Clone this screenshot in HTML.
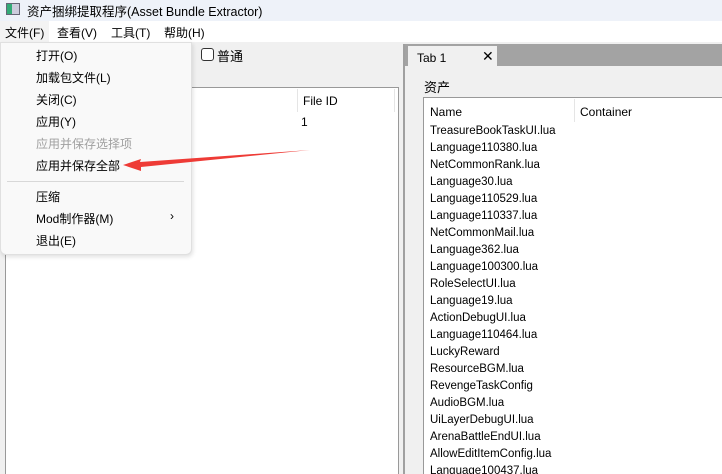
<!DOCTYPE html>
<html style="overflow:hidden;width:722px;height:474px"><head><meta charset="utf-8"><style>
*{margin:0;padding:0;box-sizing:border-box}
body{width:722px;height:474px;overflow:hidden;background:#f0f0f0;font-family:"Liberation Sans","Noto Sans CJK SC",sans-serif;font-size:12px;color:#000;position:relative}
.a{position:absolute;white-space:nowrap}
</style></head><body>
<div class="a" style="left:0;top:0;width:722px;height:21px;background:#eef2f9"></div>
<div class="a" style="left:6px;top:3px;width:14px;height:12px;border:1px solid #667;background:linear-gradient(90deg,#3a7 0 40%,#ccd 40%)"></div>
<div class="a" style="left:27px;top:1px;font-size:12.5px">资产捆绑提取程序(Asset Bundle Extractor)</div>
<div class="a" style="left:0;top:21px;width:722px;height:21px;background:#fff"></div>
<div class="a" style="left:0;top:21px;width:49px;height:21px;background:#f3f3f3"></div>
<div class="a" style="left:5px;top:24px">文件(F)</div>
<div class="a" style="left:57px;top:24px">查看(V)</div>
<div class="a" style="left:111px;top:24px">工具(T)</div>
<div class="a" style="left:164px;top:24px">帮助(H)</div>

<div class="a" style="left:201px;top:48px;width:13px;height:13px;border:1px solid #333;border-radius:3px;background:#fff"></div>
<div class="a" style="left:217px;top:46px;font-size:13px">普通</div>

<div class="a" style="left:5px;top:87px;width:394px;height:390px;background:#fff;border:1px solid #999"></div>
<div class="a" style="left:297px;top:89px;width:1px;height:23px;background:#e5e5e5"></div>
<div class="a" style="left:394px;top:89px;width:1px;height:23px;background:#e5e5e5"></div>
<div class="a" style="left:303px;top:94px">File ID</div>
<div class="a" style="left:301px;top:115px">1</div>

<div class="a" style="left:403px;top:44px;width:319px;height:430px;background:#f0f0f0;border-left:2px solid #a0a0a0"></div>
<div class="a" style="left:405px;top:44px;width:317px;height:22px;background:#a3a3a3"></div>
<div class="a" style="left:408px;top:46px;width:89px;height:22px;background:#f0f0f0"></div>
<div class="a" style="left:417px;top:51px">Tab 1</div>
<div class="a" style="left:482px;top:48px;font-size:14px">✕</div>
<div class="a" style="left:424px;top:77px;font-size:13px">资产</div>
<div class="a" style="left:423px;top:97px;width:300px;height:380px;background:#fff;border:1px solid #999"></div>
<div class="a" style="left:574px;top:99px;width:1px;height:23px;background:#e5e5e5"></div>
<div class="a" style="left:430px;top:105px">Name</div>
<div class="a" style="left:580px;top:105px">Container</div>
<div class="a" style="left:430px;top:123px;line-height:17px;font-size:11.5px">TreasureBookTaskUI.lua<br>Language110380.lua<br>NetCommonRank.lua<br>Language30.lua<br>Language110529.lua<br>Language110337.lua<br>NetCommonMail.lua<br>Language362.lua<br>Language100300.lua<br>RoleSelectUI.lua<br>Language19.lua<br>ActionDebugUI.lua<br>Language110464.lua<br>LuckyReward<br>ResourceBGM.lua<br>RevengeTaskConfig<br>AudioBGM.lua<br>UiLayerDebugUI.lua<br>ArenaBattleEndUI.lua<br>AllowEditItemConfig.lua<br>Language100437.lua</div>

<div class="a" style="left:0;top:42px;width:192px;height:213px;background:#f9f9f9;border:1px solid #e0e0e0;border-radius:0 0 6px 6px;box-shadow:1px 2px 4px rgba(0,0,0,.12)"></div>
<div class="a" style="left:36px;top:45px;line-height:22px;font-size:12px">打开(O)<br>加载包文件(L)<br>关闭(C)<br>应用(Y)<br><span style="color:#a0a0a0">应用并保存选择项</span><br>应用并保存全部</div>
<div class="a" style="left:7px;top:181px;width:177px;height:1px;background:#d8d8d8"></div>
<div class="a" style="left:36px;top:186px;line-height:22px;font-size:12px">压缩<br>Mod制作器(M)<br>退出(E)</div>
<div class="a" style="left:170px;top:209px;font-size:12px">›</div>

<svg class="a" style="left:0;top:0" width="722" height="474"><path d="M310 150 L140 162 L141 159 L123 165 L141 171 L141 167 Z" fill="#ee3b36"/></svg>
</body></html>
